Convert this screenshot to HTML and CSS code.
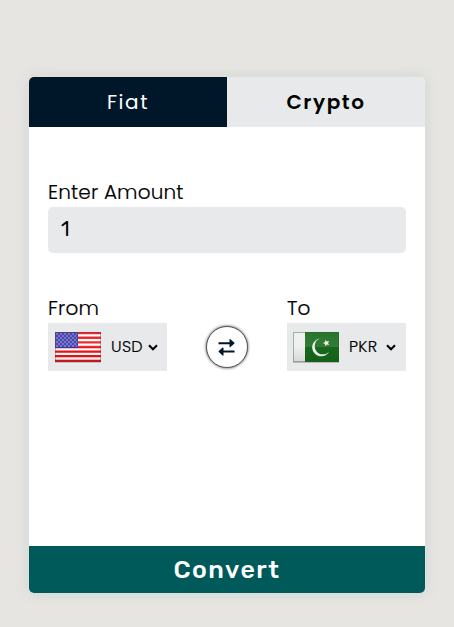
FILE: index.html
```html
<!DOCTYPE html>
<html lang="en">
<head>
<meta charset="utf-8">
<title>Currency Converter</title>
<link rel="stylesheet" href="styles.css">
</head>
<body>
<main class="card">
  <nav class="tabs">
    <button class="tab tab-active"><span>Fiat</span></button>
    <button class="tab"><span>Crypto</span></button>
  </nav>
  <section class="content">
    <label class="label label-amount" for="amount">Enter Amount</label>
    <input class="amount" id="amount" type="text" value="1">
    <div class="row">
      <div class="currency">
        <div class="label label-from">From</div>
        <div class="select">
          <svg class="flag" width="48" height="33" viewBox="0 0 48 33">
            <defs>
              <linearGradient id="shine" x1="0" y1="0" x2="0" y2="1">
                <stop offset="0" stop-color="#fff" stop-opacity=".08"/>
                <stop offset=".5" stop-color="#fff" stop-opacity=".12"/>
                <stop offset=".5" stop-color="#000" stop-opacity="0"/>
                <stop offset="1" stop-color="#000" stop-opacity=".1"/>
              </linearGradient>
              <pattern id="stars" x="2" y="2" width="4" height="4" patternUnits="userSpaceOnUse">
                <circle cx="1" cy="1" r=".65" fill="#c3c4ea"/>
                <circle cx="3" cy="3" r=".65" fill="#c3c4ea"/>
              </pattern>
            </defs>
            <rect x="1" y="2" width="46" height="30" fill="#aaa" opacity=".6"/>
            <rect x="1" y="1" width="46" height="30" fill="#fff"/>
            <path d="M1 2.15h46M1 6.77h46M1 11.39h46M1 16h46M1 20.6h46M1 25.2h46M1 29.85h46" stroke="#e81518" stroke-width="2.3"/>
            <rect x="1" y="1" width="23" height="16" fill="#3434a6"/>
            <rect x="2" y="2" width="21" height="14" fill="url(#stars)"/>
            <rect x="1" y="1" width="46" height="30" fill="url(#shine)"/>
            <rect x="1.5" y="1.5" width="45" height="29" fill="none" stroke="#812536" stroke-opacity=".35"/>
          </svg>
          <span class="code">USD</span>
          <svg class="chevron" width="10" height="7" viewBox="0 0 10 7"><path d="M1 1.3l4 4 4-4"/></svg>
        </div>
      </div>
      <button class="swap" aria-label="Swap currencies">
        <svg width="17" height="17" viewBox="0 0 17 17"><path d="M.5 3.2h11V.5c0-.6.5-.7.9-.3l3.8 3.4c.4.4.4.7 0 1.1l-3.8 3.4c-.4.4-.9.2-.9-.4V5.2H.5zM16.5 11.6h-11V9c0-.6-.5-.8-.9-.4L.8 12c-.4.4-.4.7 0 1.1l3.8 3.4c.4.4.9.2.9-.4v-2.500h11z"/></svg>
      </button>
      <div class="currency">
        <div class="label label-to">To</div>
        <div class="select select-to">
          <svg class="flag" width="48" height="33" viewBox="0 0 48 33">
            <rect x="1" y="2" width="46" height="30" fill="#999" opacity=".6"/>
            <rect x="1" y="1" width="46" height="30" fill="#16691b"/>
            <rect x="1" y="1" width="12" height="30" fill="#eee"/>
            <path d="M27.600 7.500a9 9 0 1 0 9.500 13.200A8.300 8.300 0 1 1 27.600 7.500z" fill="#f1f5f1"/>
            <path d="M33.400 8.800l1.500 1.800 2.300-.6-1.200 2 1.200 2-2.300-.5-1.600 1.700-.2-2.300-2.100-1 2.200-.9z" fill="#f1f5f1"/>
            <rect x="1" y="1" width="46" height="30" fill="url(#shine)"/>
            <rect x="1.500" y="1.500" width="45" height="29" fill="none" stroke="#285d2a" stroke-opacity=".4"/>
          </svg>
          <span class="code">PKR</span>
          <svg class="chevron" width="10" height="7" viewBox="0 0 10 7"><path d="M1 1.300l4 4 4-4"/></svg>
        </div>
      </div>
    </div>
  </section>
  <button class="convert">Convert</button>
</main>
</body>
</html>
```
FILE: styles.css
```css
* { box-sizing: border-box; }
body {
  margin: 0;
  height: 627px;
  padding: 77px 29px 34px;
  overflow: hidden;
  background: #e6e5e2;
  color: #000;
  font-family: Poppins, Inter, "Open Sans", sans-serif;
}
button { border: 0; margin: 0; padding: 0; font: inherit; color: inherit; }
.card {
  display: flex;
  flex-direction: column;
  width: 396px;
  height: 516px;
  overflow: hidden;
  background: #fff;
  border-radius: 5px;
  box-shadow: 0 0 16px rgba(0, 90, 90, .1);
}
.tabs { display: flex; height: 50px; }
.tab {
  flex: 1;
  background: #e8e9eb;
  font-size: 20px;
  font-weight: 600;
  letter-spacing: 1.6px;
}
.tab-active {
  background: #001629;
  color: #fff;
  font-weight: 400;
}
.content { flex: 1; padding: 50px 19px 0; }
.label {
  display: block;
  height: 30px;
  line-height: 30px;
  font-size: 20px;
  font-weight: 300;
  letter-spacing: .15px;
  white-space: nowrap;
  -webkit-text-stroke: .2px #000;
}
.amount {
  display: block;
  width: 358px;
  height: 46px;
  padding: 0 13px 2px;
  border: 0;
  border-radius: 5px;
  background: #e8e9eb;
  color: #000;
  font: 400 20px Rubik, Inter, sans-serif;
}
.row { display: flex; justify-content: space-between; margin-top: 40px; }
.currency { width: 119px; }
.select {
  display: flex;
  align-items: center;
  height: 48px;
  padding-left: 6px;
  background: #e8e9eb;
}
.select-to { padding-left: 5px; }
.flag { flex: none; }
.code {
  width: 37px;
  margin-left: 9px;
  font-size: 16px;
  font-weight: 300;
  line-height: 24px;
  letter-spacing: .3px;
  -webkit-text-stroke: .2px #000;
}
.chevron { flex: none; fill: none; stroke: #000; stroke-width: 2.1; }
.swap {
  display: flex;
  align-items: center;
  justify-content: center;
  width: 42px;
  height: 42px;
  margin-top: 33px;
  border: 1px solid #555;
  border-radius: 50%;
  background: #fff;
  box-shadow: 0 0 3px #444;
}
.swap svg { fill: #001629; margin-right: 1px; }
.convert {
  height: 47px;
  background: #005a5a;
  color: #fff;
  font-family: Rubik, Inter, sans-serif;
  font-size: 25px;
  font-weight: 500;
  letter-spacing: 1.5px;
}
```
